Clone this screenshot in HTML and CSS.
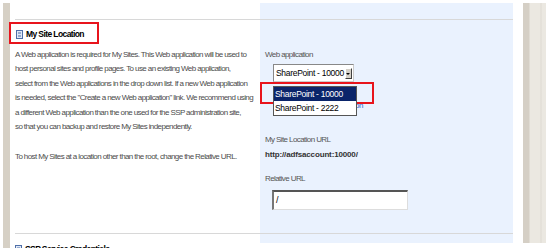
FILE: index.html
```html
<!DOCTYPE html>
<html lang="en">
<head>
    <meta charset="UTF-8">
    <title>Create New Shared Services Provider</title>
    <link rel="stylesheet" href="styles.css">
</head>
<body>
    <div class="page">
        <div class="edge-left"></div>
        <div class="form">
            <div class="row spacer">
                <div class="desc"></div>
                <div class="ctrl"></div>
            </div>
            <div class="row section">
                <div class="desc">
                    <h3 class="section-title">
                        <svg class="toggle" width="7" height="9" viewBox="0 0 7 9">
                            <rect x="0.5" y="0.5" width="6" height="8" fill="#dfe8f6" stroke="#4f6fa8"/>
                            <line x1="2" y1="3" x2="5" y2="3" stroke="#4f6fa8"/>
                            <line x1="2" y1="6" x2="5" y2="6" stroke="#4f6fa8"/>
                        </svg>
                        My Site Location
                    </h3>
                    <p>A Web application is required for My Sites. This Web application will be used to<br>
                    host personal sites and profile pages. To use an existing Web application,<br>
                    select from the Web applications in the drop down list. If a new Web application<br>
                    is needed, select the "Create a new Web application" link. We recommend using<br>
                    a different Web application than the one used for the SSP administration site,<br>
                    so that you can backup and restore My Sites independently.</p>
                    <p>To host My Sites at a location other than the root, change the Relative URL.</p>
                </div>
                <div class="ctrl">
                    <div class="field-label">Web application</div>
                    <div class="select-wrap">
                        <div class="select">
                            <span>SharePoint - 10000</span>
                            <span class="select-btn"></span>
                        </div>
                        <ul class="dropdown">
                            <li class="selected">SharePoint - 10000</li>
                            <li>SharePoint - 2222</li>
                        </ul>
                    </div>
                    <a class="create-link" href="#">Create a new Web application</a>
                    <div class="field-label url-label">My Site Location URL</div>
                    <div class="url-value">http://adfsaccount:10000/</div>
                    <div class="field-label">Relative URL</div>
                    <div class="text-input">/</div>
                </div>
            </div>
            <div class="row spacer bottom">
                <div class="desc"></div>
                <div class="ctrl"></div>
            </div>
            <div class="row next">
                <h3 class="section-title">
                    <svg class="toggle" width="7" height="9" viewBox="0 0 7 9">
                        <rect x="0.5" y="0.5" width="6" height="8" fill="#dfe8f6" stroke="#4f6fa8"/>
                        <line x1="2" y1="3" x2="5" y2="3" stroke="#4f6fa8"/>
                    </svg>
                    SSP Service Credentials
                </h3>
            </div>
        </div>
        <div class="edge-right"></div>

        <div class="callout callout-title"></div>
        <div class="callout callout-option"></div>
    </div>
</body>
</html>
```

FILE: styles.css
```css
body {
    margin: 0;
    background-color: #fff;
    font-family: "Liberation Sans", Arial, sans-serif;
    font-size: 8px;
    color: #4c4c4c;
}

.page {
    position: relative;
    display: flex;
    width: 546px;
    height: 248px;
    padding-top: 3px;
    box-sizing: border-box;
    overflow: hidden;
}

.edge-left {
    width: 7px;
    margin-left: 3px;
    background-color: #d6d0c5;
}

.form {
    width: 498px;
    margin-left: 5px;
}

.row {
    display: grid;
    grid-template-columns: 245px 253px;
}

.ctrl {
    background-color: #eaf2fe;
}

.spacer {
    height: 16px;
}

.spacer.bottom {
    height: 9px;
    border-top: 1px solid #d8d8d8;
}

.section {
    height: 213px;
    border-top: 1px solid #d8d8d8;
}

.section .desc {
    padding: 4px 2px 0 0;
    white-space: nowrap;
}

.section-title {
    display: flex;
    align-items: center;
    gap: 3px;
    margin: 0 0 7px 1px;
    padding-top: 3px;
    font-size: 8.5px;
    line-height: 14px;
    letter-spacing: -0.6px;
    color: #000;
}

.desc p {
    margin: 0 0 16px;
    line-height: 14.4px;
    letter-spacing: -0.6px;
}

.ctrl {
    padding: 28px 0 0 5px;
    box-sizing: border-box;
}

.spacer .ctrl,
.next .ctrl {
    padding: 0;
}

.field-label {
    line-height: 14px;
    letter-spacing: -0.6px;
    color: #555;
}

.select-wrap {
    position: relative;
    width: 81px;
    margin: 2px 0 0 8px;
}

.select {
    display: flex;
    align-items: center;
    justify-content: space-between;
    height: 18px;
    padding: 0 1px 0 2px;
    box-sizing: border-box;
    border: 1px solid;
    border-color: #888 #ccc #ccc #888;
    background-color: #fff;
    font-size: 8.5px;
    letter-spacing: -0.3px;
    color: #000;
}

.select-btn {
    position: relative;
    width: 7px;
    height: 11px;
    background-color: #d4d0c8;
    border: 1px solid;
    border-color: #fff #404040 #404040 #fff;
    box-sizing: border-box;
}

.select-btn::after {
    content: "";
    position: absolute;
    left: 0;
    top: 4px;
    border-left: 2px solid transparent;
    border-right: 2px solid transparent;
    border-top: 2px solid #000;
}

.dropdown {
    position: absolute;
    top: 22px;
    left: 0;
    width: 82px;
    margin: 0;
    padding: 0;
    list-style: none;
    border: 1px solid #555;
    background-color: #fff;
    font-size: 8.5px;
    letter-spacing: -0.3px;
    color: #000;
    z-index: 1;
}

.dropdown li {
    height: 14px;
    line-height: 14px;
    padding-left: 1px;
}

.dropdown .selected {
    background-color: #0a246a;
    color: #fff;
}

.create-link {
    display: block;
    margin: 17px 0 0 8px;
    line-height: 14px;
    letter-spacing: -0.6px;
    color: #3366cc;
    text-decoration: none;
}

.url-label {
    margin-top: 20px;
}

.url-value {
    margin-top: 1px;
    line-height: 14px;
    font-weight: bold;
    letter-spacing: -0.15px;
    color: #333;
}

.url-value + .field-label {
    margin-top: 10px;
}

.text-input {
    width: 136px;
    height: 20px;
    margin: 4px 0 0 7px;
    padding-left: 2px;
    box-sizing: border-box;
    border: 1px solid;
    border-width: 2px 1px 1px 2px;
    border-color: #555 #ddd #ddd #777;
    background-color: #fff;
    line-height: 17px;
    font-size: 9px;
    color: #000;
}

.next .section-title {
    grid-column: 1 / span 2;
    margin: 0;
    padding-top: 0;
    line-height: 12px;
}

.edge-right {
    width: 23px;
    margin-left: 10px;
    height: 240px;
    background: linear-gradient(to right, #d5cfc5 0, #d5cfc5 6px, #ebe8e1 7px, #ebe8e1 17px, #dedad2 18px, #ebe8e1 19px);
}

.callout {
    position: absolute;
    border: 2px solid #e8141c;
    box-sizing: border-box;
}

.callout-title {
    left: 9px;
    top: 22px;
    width: 90px;
    height: 22px;
}

.callout-option {
    left: 260px;
    top: 82px;
    width: 114px;
    height: 22px;
}
```
